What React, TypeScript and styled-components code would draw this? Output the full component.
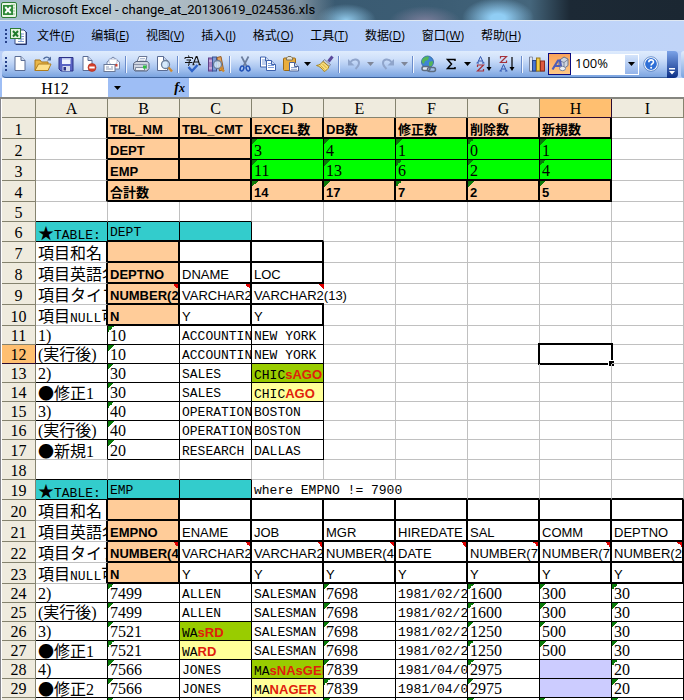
import React from "react";
import styled, { createGlobalStyle, css } from "styled-components";

const SANS = '"Liberation Sans", "Noto Sans CJK JP", sans-serif';
const MONO = '"Liberation Mono", "Noto Sans CJK JP", monospace';
const SERIF = '"Liberation Serif", "Noto Sans CJK JP", serif';
const UI = '"Open Sans", "Noto Sans CJK SC", sans-serif';

const GlobalStyle = createGlobalStyle`
  *, *::before, *::after { box-sizing: border-box; }
  body { margin: 0; background: #fff; color: #000; overflow: hidden; }
  button, input, select { font: inherit; color: inherit; border: 0; padding: 0; margin: 0; border-radius: 0; outline: none; }
`;

/* ---------- window frame ---------- */

const Window = styled.main`
  display: flex;
  flex-direction: column;
  height: 100vh;
  overflow: hidden;
  background: #9ebef5;
`;

const TitleBar = styled.header`
  display: flex;
  align-items: center;
  flex: none;
  gap: 5px;
  height: 21px;
  padding-left: 1px;
  border-bottom: 1px solid #dfe8f2;
  background:
    linear-gradient(90deg, #a3bccb 0, #b9c8d0 110px, #a3b1ba 230px, rgba(130, 148, 162, 0.9) 300px, transparent 335px),
    radial-gradient(ellipse 30px 16px at 346px 20px, #8fc8ea, transparent),
    radial-gradient(ellipse 36px 16px at 425px 22px, #7d7f9c, transparent),
    radial-gradient(ellipse 36px 20px at 498px 18px, #90cdf4 20%, transparent),
    linear-gradient(90deg, #34536b 0, #3c5d74 440px, #45667c 530px, #1c2935 570px, #1b2732 100%);
`;

const Title = styled.h1`
  margin: 0;
  font: 400 13px/18px Roboto, ${UI};
  white-space: nowrap;
`;

const MenuBar = styled.nav`
  display: flex;
  align-items: center;
  flex: none;
  height: 30px;
  padding-left: 5px;
  background: linear-gradient(90deg, #9ebdf5, #bdd3f9 70%, #c0d4f8);
`;

const Grip = styled.i`
  flex: none;
  width: 2px;
  height: 15px;
  background: repeating-linear-gradient(180deg, #27418a 0 2px, transparent 2px 4px);
`;

const MenuIcon = styled.span`
  display: flex;
  margin: 0 10px 0 3px;
`;

const MenuList = styled.div`
  display: flex;
  gap: 17px;
`;

const MenuButton = styled.button`
  background: none;
  font: 400 12px/18px ${UI};
  white-space: nowrap;
`;

/* ---------- toolbar ---------- */

const ToolRow = styled.div`
  display: flex;
  flex: none;
  height: 27px;
  padding-left: 2px;
  background: #b9cff8;
`;

const ToolBar = styled.div`
  display: flex;
  align-items: center;
  flex: none;
  width: 665px;
  padding-left: 3px;
  border-radius: 4px 0 0 4px;
  border-bottom: 1px solid #3b619c;
  background: linear-gradient(180deg, #dfecfd 0, #cfe0fa 30%, #a9c5f0 65%, #7ba4e0 100%);
`;

const Tools = styled.div`
  display: flex;
  align-items: center;
  margin-left: 1px;
`;

const ToolButton = styled.button<{ $active?: boolean }>`
  display: flex;
  align-items: center;
  justify-content: center;
  width: 23px;
  height: 22px;
  background: none;
  ${(p) =>
    p.$active &&
    css`
      border: 1px solid #0a0a80;
      background: linear-gradient(180deg, #f9a35c, #ffc884);
    `}
`;

const DropButton = styled.button<{ $faded?: boolean }>`
  display: flex;
  align-items: center;
  justify-content: center;
  width: 11px;
  height: 22px;
  background: none;
  color: ${(p) => (p.$faded ? "#7f8698" : "#000")};
`;

const Separator = styled.i`
  width: 2px;
  height: 17px;
  margin: 0 2px;
  background: linear-gradient(90deg, #6a8ccb 50%, #f1f6ff 50%);
`;

const ZoomBox = styled.div`
  display: flex;
  position: relative;
  width: 68px;
  height: 21px;
`;

const ZoomSelect = styled.select`
  flex: 1;
  appearance: none;
  padding: 0 0 2px 4px;
  background: #fff;
  font: 400 13px/19px ${UI};
`;

const ZoomArrow = styled.span`
  position: absolute;
  inset: 1px 1px 1px auto;
  display: flex;
  align-items: center;
  justify-content: center;
  width: 13px;
  background: linear-gradient(180deg, #d5e4fb, #93b4ea);
  pointer-events: none;
`;

const ToolEnd = styled.button`
  display: flex;
  flex: none;
  align-items: flex-end;
  justify-content: center;
  width: 11px;
  padding-bottom: 3px;
  border-radius: 0 4px 4px 0;
  background: linear-gradient(180deg, #7ba2e7, #0b2f86);
`;

const NextBar = styled.div`
  flex: 1;
  margin-left: 3px;
  border-radius: 4px 0 0 4px;
  background: linear-gradient(180deg, #dfecfd, #7ba4e0);
`;

/* ---------- formula bar ---------- */

const FormulaBar = styled.div`
  display: flex;
  flex: none;
  height: 19px;
  padding-left: 2px;
`;

const NameBox = styled.input`
  width: 106px;
  padding-top: 2px;
  background: #fff;
  font: 400 16px/16px ${SERIF};
  text-align: center;
`;

const NameDrop = styled.button`
  display: flex;
  align-items: center;
  justify-content: center;
  width: 19px;
  background: none;
`;

const FxButton = styled.button`
  width: 62px;
  padding-right: 4px;
  background: none;
  font: italic 700 14px/17px ${SERIF};
  text-align: right;
  sub { font-size: 12px; line-height: 12px; vertical-align: baseline; }
`;

const FormulaInput = styled.input`
  flex: 1;
  min-width: 0;
  background: #fff;
`;

/* ---------- sheet ---------- */

const Sheet = styled.section`
  flex: 1;
  min-height: 0;
  overflow: hidden;
  padding-left: 1px;
  border-top: 2px solid #85857f;
  border-left: 1px solid #85858c;
  background: #fff;
`;

const Grid = styled.table`
  width: 682px;
  table-layout: fixed;
  border-collapse: separate;
  border-spacing: 0;
`;

const HeadCell = styled.th<{ $active?: boolean; $h: number }>`
  height: ${(p) => p.$h}px;
  padding: 0;
  border-right: 1px solid ${(p) => (p.$active ? "#2a0a30" : "#85836f")};
  border-bottom: 1px solid ${(p) => (p.$active ? "#2a0a30" : "#85836f")};
  background: ${(p) => (p.$active ? "#ffbf70" : "#efebde")};
  font: 400 16px/16px ${SERIF};
  vertical-align: bottom;
`;

type Line = "none" | "grid" | "thin" | "thick";
const LINES: Record<Line, string> = {
  none: "0 solid transparent",
  grid: "1px solid #c0c0c0",
  thin: "1px solid #000",
  thick: "2px solid #000",
};

const FILLS: Record<string, string> = {
  peach: "#ffcc99",
  lime: "#00ff00",
  teal: "#33cccc",
  olive: "#99cc00",
  cream: "#ffff99",
  lilac: "#ccccff",
};

const MARKS: Record<string, string> = {
  text: "linear-gradient(135deg, #0a7a0a 50%, transparent 50%) left top / 6px 6px no-repeat",
  note: "linear-gradient(225deg, #e00000 50%, transparent 50%) right top / 5px 5px no-repeat",
};

const DataCell = styled.td<{ $right: Line; $bottom: Line; $fill?: string; $mark?: string }>`
  position: relative;
  padding: 0;
  border-right: ${(p) => LINES[p.$right]};
  border-bottom: ${(p) => LINES[p.$bottom]};
  background: ${(p) => (p.$mark ? MARKS[p.$mark] : "none")};
  background-color: ${(p) => (p.$fill ? FILLS[p.$fill] : "transparent")};
  background-clip: padding-box;
  vertical-align: bottom;
`;

type Face = "mono" | "serif" | "sans" | "bold";

const FACES: Record<Face, string> = {
  mono: `400 13px/20px ${MONO}`,
  serif: `400 16px/18px ${SERIF}`,
  sans: `400 13px/20px ${SANS}`,
  bold: `700 13px/20px ${SANS}`,
};

const CellText = styled.div<{ $face: Face; $spill?: boolean }>`
  height: 17px;
  padding-left: 2px;
  overflow: ${(p) => (p.$spill ? "visible" : "hidden")};
  font: ${(p) => FACES[p.$face]};
  white-space: pre;
`;

const Mono = styled.span`
  font: 400 13px/16px ${MONO};
`;

const Glyph = styled.span`
  font: 400 16px/16px "Noto Sans CJK JP", sans-serif;
`;

const Changed = styled.b`
  color: #e0200c;
  font: ${FACES.bold};
`;

const Selection = styled.span`
  position: absolute;
  inset: -2px -2px -2px -2px;
  border: 2px solid #000;
  &::after {
    content: "";
    position: absolute;
    right: -3px;
    bottom: -3px;
    width: 5px;
    height: 5px;
    background: #000;
    box-shadow: -1px -1px 0 #fff;
  }
`;

/* ---------- icons ---------- */

const Icon = ({ children, size = 18 }: { children: React.ReactNode; size?: number }) => (
  <svg width={size} height={size} viewBox="0 0 18 18" fill="none" aria-hidden="true">
    {children}
  </svg>
);

const Arrow = ({ color = "currentColor" }: { color?: string }) => (
  <svg width="7" height="4" viewBox="0 0 7 4" aria-hidden="true">
    <path d="M0 0h7L3.500 4z" fill={color} />
  </svg>
);

const page = (x: number, y: number, w: number, h: number, stroke = "#5a6c94") => (
  <>
    <path d={`M${x} ${y}h${w - 4}l4 4v${h - 4}h-${w}z`} fill="#fff" stroke={stroke} />
    <path d={`M${x + w - 4} ${y}v4h4`} fill="#cbd8ef" stroke={stroke} />
  </>
);

const lens = (
  <>
    <circle cx="10.500" cy="9.500" r="4" fill="#cfe6fb" fillOpacity="0.85" stroke="#6c7f99" strokeWidth="1.300" />
    <path d="M13.500 12.500l3.500 4" stroke="#d08a2c" strokeWidth="2.400" />
  </>
);

const ExcelIcon = () => (
  <svg width="16" height="16" viewBox="0 0 16 16" aria-hidden="true">
    <rect x="0.500" y="0.500" width="15" height="15" rx="1.500" fill="#eaf6e6" stroke="#2d7d35" />
    <path d="M10 3h4M10 6h4M10 9h4M10 12h4" stroke="#8fbf8c" />
    <rect x="2" y="3" width="10" height="10" fill="#2f8a3a" />
    <path d="M4.300 5l5.400 6M9.700 5l-5.400 6" stroke="#fff" strokeWidth="1.900" />
  </svg>
);

const WorkbookIcon = () => (
  <svg width="17" height="17" viewBox="0 0 17 17" aria-hidden="true">
    <path d="M6 2h8l2 2v12H5V10" fill="#fff" stroke="#3b4f86" />
    <path d="M16.500 4v12.500H6" stroke="#25346a" fill="none" />
    <path d="M11 6h3M11 8.500h3M8 11h6M8 13.500h6M11 5v9" stroke="#7f9bd0" />
    <rect x="0.500" y="0.500" width="10" height="10" fill="#e3f3df" stroke="#2d7d35" />
    <path d="M3 3l5 5.500M8 3L3 8.500" stroke="#1f7a2c" strokeWidth="2" />
  </svg>
);

const NewIcon = () => <Icon>{page(4, 1.5, 10, 14)}</Icon>;

const OpenIcon = () => (
  <Icon>
    <path d="M1 15.500V5h5l1.500 2H14v8.500z" fill="#e9b74a" stroke="#a9761b" />
    <path d="M1 15.500L4.500 9H17l-3 6.500z" fill="#ffe08a" stroke="#b07d1d" />
    <path d="M9.500 4c2-2.500 4.500-2.500 6-.500" stroke="#4d6a9c" strokeWidth="1.300" />
    <path d="M17 1.500v4h-4z" fill="#4d6a9c" />
  </Icon>
);

const SaveIcon = () => (
  <Icon>
    <path d="M2 2.500h14v13.500H4l-2-2z" fill="#5a63c4" stroke="#2b3286" />
    <rect x="5" y="3" width="8.500" height="6" fill="#eef2ff" />
    <path d="M5 3h8.500v1.500H5z" fill="#b9c5ee" />
    <rect x="5.500" y="11" width="7.500" height="5" fill="#d7dcef" />
    <rect x="6.500" y="12" width="2.500" height="3.500" fill="#2b3286" />
  </Icon>
);

const PermissionIcon = () => (
  <Icon>
    {page(3, 1.5, 9, 14)}
    <circle cx="12" cy="12.500" r="4" fill="#d5402c" stroke="#a8281a" strokeWidth="0.600" />
    <rect x="9.300" y="11.500" width="5.400" height="2" fill="#fff" />
  </Icon>
);

const MailIcon = () => (
  <Icon>
    <path d="M4 7l6-5 6.500 5v7H4z" fill="#f7f9ff" stroke="#7485a8" />
    <path d="M6 7.500V4h8v4l-4 3z" fill="#fff" stroke="#9aa8c6" strokeWidth="0.700" />
    <rect x="12" y="9" width="2.500" height="2.500" fill="#d5402c" />
    <rect x="1" y="9.500" width="11" height="7" fill="#fff" stroke="#6a7896" />
    <path d="M3 12h3M3 14h7M8 12h2" stroke="#8c9ab8" />
  </Icon>
);

const PrintIcon = () => (
  <Icon>
    <path d="M5 7l2-5.500h8L13.500 7z" fill="#fff" stroke="#6a7896" />
    <path d="M8 3.500h5M7.500 5.200h5" stroke="#9aaac9" strokeWidth="0.800" />
    <path d="M1.500 8.500L4 6.500h11.500l1.500 2v5L15 16H3l-1.500-2z" fill="#cfd5e2" stroke="#59657f" />
    <path d="M2 9.500h12.500v4" stroke="#8a95ac" />
    <path d="M3.500 12.500h9v3h-9z" fill="#eef1f7" stroke="#59657f" strokeWidth="0.700" />
    <rect x="11" y="10.500" width="3.500" height="3" fill="#2fc140" />
  </Icon>
);

const PreviewIcon = () => (
  <Icon>
    {page(2.5, 1.5, 10, 14)}
    {lens}
  </Icon>
);

const SpellIcon = () => (
  <Icon>
    <path d="M4.500 0.500l.500 1.500M1 4V2.500h7.500V4M2.500 5h4.500L5 6.500v3.500l-1 .500M1 7.500h7.500" stroke="#111" />
    <path d="M9 9.500l3.200-8h.8L15.500 9.500M10 7h5M8.500 9.700h2M14.500 9.700h2.500" stroke="#111" strokeWidth="1.100" />
    <path d="M4.500 12l3.500 4 5.500-6" stroke="#2f63c8" strokeWidth="2.400" />
  </Icon>
);

const ResearchIcon = () => (
  <Icon>
    <rect x="1.500" y="3" width="4" height="13" fill="#a77fc0" stroke="#5e3f86" />
    <path d="M2 6h3M2 13h3" stroke="#e9d9f2" />
    <rect x="5.500" y="2" width="4" height="14" fill="#7f9ad6" stroke="#3a5494" />
    <path d="M10 2.500l4-1 2.500 13-4 1.500z" fill="#e2a35f" stroke="#95602a" />
    {lens}
  </Icon>
);

const CutIcon = () => (
  <Icon>
    <path d="M5.500 1.500L10.500 11M12.500 1.500L7.500 11" stroke="#6d7f9e" strokeWidth="1.700" />
    <ellipse cx="6" cy="13.500" rx="1.800" ry="2.500" stroke="#1f4fb4" strokeWidth="1.500" transform="rotate(20 6 13.500)" />
    <ellipse cx="12" cy="13.500" rx="1.800" ry="2.500" stroke="#1f4fb4" strokeWidth="1.500" transform="rotate(-20 12 13.500)" />
  </Icon>
);

const CopyIcon = () => (
  <Icon>
    {page(1.5, 2, 9, 10, "#3e63ae")}
    <path d="M3 7h6M3 9h6M3 5h3" stroke="#7f9fdc" />
    {page(7.500, 5.500, 9, 10, "#3e63ae")}
    <path d="M9 10.500h6M9 12.500h6M9 8.500h3" stroke="#7f9fdc" />
  </Icon>
);

const PasteIcon = () => (
  <Icon>
    <rect x="1.500" y="3" width="12" height="12.500" rx="1" fill="#e9ad3c" stroke="#9a6a17" />
    <path d="M4.500 5V3l1.500-1.500h3L10.500 3v2z" fill="#e6e2d3" stroke="#7c7560" />
    {page(7.500, 7.500, 9, 8.500, "#4d6396")}
    <path d="M9 12.500h6M9 14.300h6" stroke="#8ea4d0" />
  </Icon>
);

const BrushIcon = () => (
  <Icon>
    <path d="M16.500 1.500l-4 5" stroke="#5b4a9c" strokeWidth="3" />
    <path d="M8.500 4.500l6 5-1.500 2-6.500-5z" fill="#c3c9d9" stroke="#6b7590" strokeWidth="0.800" />
    <path d="M7 6.500l6 5c-1 3-3 4-5 5-1-2-4.500-5.500-7.500-6 3-.500 5-2 6.500-4z" fill="#f7dc7c" stroke="#a98622" />
    <path d="M4.500 10.500l4 4M6.500 9l4 4" stroke="#d3ab3c" />
  </Icon>
);

const UndoIcon = () => (
  <Icon>
    <path d="M5.500 7C8.500 3 14 4 14 8c0 2.500-1.500 4-3.500 6" stroke="#90a5cb" strokeWidth="2" />
    <path d="M3 4v6.500h6.500z" fill="#90a5cb" />
  </Icon>
);

const RedoIcon = () => (
  <Icon>
    <path d="M12.500 7C9.500 3 4 4 4 8c0 2.500 1.500 4 3.500 6" stroke="#90a5cb" strokeWidth="2" />
    <path d="M15 4v6.500H8.500z" fill="#90a5cb" />
  </Icon>
);

const LinkIcon = () => (
  <Icon>
    <circle cx="8.500" cy="7" r="6" fill="#3f86d4" stroke="#2a5e9c" strokeWidth="0.800" />
    <path d="M4 3.500c2-2 5-2.500 6-1.500l-1 3-3 1-1 3-2-1.500c-.500-1.500 0-3 1-4zM10 7l3.500-1c1 2 0 4-1.500 5.500l-2-1z" fill="#55b557" />
    <rect x="3" y="11.500" width="8" height="4" rx="2" stroke="#5d6c80" strokeWidth="1.500" fill="#e4ebf4" />
    <rect x="8.500" y="12.500" width="8" height="4" rx="2" stroke="#5d6c80" strokeWidth="1.500" />
  </Icon>
);

const SumIcon = () => (
  <Icon>
    <path d="M13 6V4.500H5.500L9.500 9l-4 4.500H13V12" stroke="#000" strokeWidth="1.500" />
  </Icon>
);

const letterA = (y: number) => <path d={`M1.500 ${y + 6.500}L4.500 ${y}L7.500 ${y + 6.500}M2.500 ${y + 4.500}h4M.500 ${y + 6.500}h2.500M6 ${y + 6.500}h2.500`} stroke="#3458b0" strokeWidth="1" />;
const letterZ = (y: number) => <path d={`M1.500 ${y + 2}V${y}h6L1.500 ${y + 6}h6v-2`} stroke="#a5323c" strokeWidth="1.200" />;

const SortIcon = ({ descending = false }: { descending?: boolean }) => (
  <Icon>
    {descending ? letterZ(1.5) : letterA(1.5)}
    {descending ? letterA(9.5) : letterZ(10)}
    <path d="M13 2v12" stroke="#000" strokeWidth="1.200" />
    <path d="M10.500 12h5L13 16z" fill="#000" />
  </Icon>
);

const ChartIcon = () => (
  <Icon>
    <path d="M1.500 2v14h15" stroke="#505a70" />
    <path d="M1.500 2h3v14h-3z" fill="#dfe4ee" stroke="#6b7590" strokeWidth="0.700" />
    <rect x="4.500" y="5.500" width="3.500" height="10.500" fill="#4a76d2" stroke="#24448c" />
    <rect x="8.500" y="3" width="3.500" height="13" fill="#f4cd45" stroke="#97771b" />
    <rect x="12.500" y="6" width="4" height="10" fill="#dc5940" stroke="#8e2b1b" />
  </Icon>
);

const DrawingIcon = () => (
  <Icon>
    <path d="M8 5.500l5-3.500 4 2v6.500l-4 3-5-2z" fill="#cfd5df" stroke="#68748e" />
    <path d="M8 5.500l5 2 4-3M13 7.500v6" stroke="#68748e" strokeWidth="0.800" />
    <path d="M1.500 14.500L7 5.500h2l1.500 9M4 11h5.500" stroke="#4d5cb8" strokeWidth="2.200" />
    <ellipse cx="11.500" cy="13.500" rx="3" ry="2.200" fill="#eceff5" stroke="#77829b" />
  </Icon>
);

const HelpIcon = () => (
  <Icon>
    <circle cx="9" cy="9" r="6.500" fill="#2f6fd6" stroke="#fff" strokeWidth="1.200" />
    <circle cx="9" cy="9" r="7.300" stroke="#4673b8" strokeWidth="0.700" />
    <path d="M6.800 7.200c0-3.200 4.700-3 4.700-.300 0 1.800-2.400 1.800-2.400 3.700" stroke="#fff" strokeWidth="1.600" />
    <circle cx="9.100" cy="12.700" r="1" fill="#fff" />
  </Icon>
);

/* ---------- data ---------- */

const MENUS = [
  ["文件", "F"], ["编辑", "E"], ["视图", "V"], ["插入", "I"], ["格式", "O"],
  ["工具", "T"], ["数据", "D"], ["窗口", "W"], ["帮助", "H"],
];

const COLUMNS = ["A", "B", "C", "D", "E", "F", "G", "H", "I"];

type Cell = {
  text?: React.ReactNode;
  face?: Face;
  fill?: string;
  mark?: string;
  spill?: boolean;
  span?: number;
};

const label = (text: React.ReactNode, fill?: string): Cell => ({ text, face: "serif", fill });
const mono = (text: string): Cell => ({ text, face: "mono" });
const num = (text: string, fill?: string): Cell => ({ text, face: "serif", mark: "text", fill });
const head = (text: string): Cell => ({ text, face: "bold", fill: "peach" });
const total = (text: string): Cell => ({ ...head(text), mark: "text" });
const sans = (text: string): Cell => ({ text, face: "sans" });
const type = (text: string): Cell => ({ text, face: "sans", mark: "note" });
const diff = (fill: string, plain: string, changed: string): Cell => ({
  text: <>{plain}<Changed>{changed}</Changed></>,
  face: "mono",
  fill,
});
const empty: Cell = {};
const lilac: Cell = { fill: "lilac" };
const keyType = (text: string): Cell => ({ ...head(text), mark: "note" });
const bullet = (text: string): Cell => label(<><Glyph>●</Glyph>{text}</>);

const tableTag = label(<><Glyph>★</Glyph><Mono>TABLE:</Mono></>, "teal");
const nullTag = label(<>項目<Mono>NULL</Mono>可</>);

const ROWS: Cell[][] = [
  [empty, head("TBL_NM"), head("TBL_CMT"), head("EXCEL数"), head("DB数"), head("修正数"), head("削除数"), head("新規数")],
  [empty, head("DEPT"), head(""), num("3", "lime"), num("4", "lime"), num("1", "lime"), num("0", "lime"), num("1", "lime")],
  [empty, head("EMP"), head(""), num("11", "lime"), num("13", "lime"), num("6", "lime"), num("2", "lime"), num("4", "lime")],
  [empty, { ...head("合計数"), span: 2 }, total("14"), total("17"), total("7"), total("2"), total("5")],
  [],
  [tableTag, { ...mono("DEPT"), fill: "teal" }, { fill: "teal" }],
  [label("項目和名"), head("")],
  [label("項目英語名"), head("DEPTNO"), sans("DNAME"), sans("LOC")],
  [label("項目タイプ"), keyType("NUMBER(2)"), type("VARCHAR2(14)"), { ...type("VARCHAR2(13)"), spill: true }],
  [nullTag, head("N"), sans("Y"), sans("Y")],
  [label("1)"), num("10"), mono("ACCOUNTING"), mono("NEW YORK")],
  [label("(実行後)"), num("10"), mono("ACCOUNTING"), mono("NEW YORK")],
  [label("2)"), num("30"), mono("SALES"), diff("olive", "CHIC", "sAGO")],
  [bullet("修正1"), num("30"), mono("SALES"), diff("cream", "CHIC", "AGO")],
  [label("3)"), num("40"), mono("OPERATIONS"), mono("BOSTON")],
  [label("(実行後)"), num("40"), mono("OPERATIONS"), mono("BOSTON")],
  [bullet("新規1"), num("20"), mono("RESEARCH"), mono("DALLAS")],
  [],
  [tableTag, { ...mono("EMP"), fill: "teal" }, { fill: "teal" }, { ...mono("where EMPNO != 7900"), spill: true }],
  [label("項目和名"), head("")],
  [label("項目英語名"), head("EMPNO"), sans("ENAME"), sans("JOB"), sans("MGR"), sans("HIREDATE"), sans("SAL"), sans("COMM"), sans("DEPTNO")],
  [label("項目タイプ"), keyType("NUMBER(4)"), type("VARCHAR2(10)"), type("VARCHAR2(9)"), type("NUMBER(4)"), type("DATE"), type("NUMBER(7,2)"), type("NUMBER(7,2)"), type("NUMBER(2)")],
  [nullTag, head("N"), sans("Y"), sans("Y"), sans("Y"), sans("Y"), sans("Y"), sans("Y"), sans("Y")],
  [label("2)"), num("7499"), mono("ALLEN"), mono("SALESMAN"), num("7698"), mono("1981/02/20"), num("1600"), num("300"), num("30")],
  [label("(実行後)"), num("7499"), mono("ALLEN"), mono("SALESMAN"), num("7698"), mono("1981/02/20"), num("1600"), num("300"), num("30")],
  [label("3)"), num("7521"), diff("olive", "WA", "sRD"), mono("SALESMAN"), num("7698"), mono("1981/02/22"), num("1250"), num("500"), num("30")],
  [bullet("修正1"), num("7521"), diff("cream", "WA", "RD"), mono("SALESMAN"), num("7698"), mono("1981/02/22"), num("1250"), num("500"), num("30")],
  [label("4)"), num("7566"), mono("JONES"), diff("olive", "MA", "sNAsGER"), num("7839"), mono("1981/04/02"), num("2975"), lilac, num("20")],
  [bullet("修正2"), num("7566"), mono("JONES"), diff("cream", "MA", "NAGER"), num("7839"), mono("1981/04/02"), num("2975"), lilac, num("20")],
  [label("5)"), num("7654"), mono("MARTIN"), mono("SALESMAN"), num("7698"), mono("1981/09/28"), num("1250"), num("1400"), num("30")],
];

const within = (n: number, low: number, high: number) => n >= low && n <= high;

const rowHeight = (r: number) => {
  if (within(r, 11, 16) || r >= 24) return 19;
  return r === 5 || r === 6 || within(r, 17, 19) ? 20 : 21;
};

const rightLine = (r: number, c: number): Line => {
  if (r === 9 && c === 3) return "none";
  if (r === 19 && (c === 3 || c === 4)) return "none";
  if ((r === 1 || r === 4) && c <= 7) return "thick";
  if ((r === 2 || r === 3) && c <= 7) return c <= 2 ? "thick" : "thin";
  if ((r === 6 || r === 19) && c <= 2) return "thin";
  if (within(r, 7, 10) && c <= 3) return "thick";
  if (within(r, 11, 17) && c <= 3) return "thin";
  if (within(r, 20, 23)) return "thick";
  return r >= 24 ? "thin" : "grid";
};

const bottomLine = (r: number, c: number): Line => {
  if (r === 2 && within(c, 3, 7)) return "thin";
  if (r <= 4 && within(c, 1, 7)) return "thick";
  if ((r === 5 || r === 18) && c <= 2) return "thin";
  if ((r === 6 || r === 19) && c === 0) return "thin";
  if (within(r, 6, 10) && within(c, 1, 3)) return "thick";
  if (within(r, 11, 16) && c <= 3) return "thin";
  if (r === 17 && within(c, 1, 3)) return "thin";
  if (within(r, 19, 23) && c >= 1) return "thick";
  return r >= 24 ? "thin" : "grid";
};

const SheetRow = ({ cells, row }: { cells: Cell[]; row: number }) => {
  const drawn: React.ReactNode[] = [];
  let index = 0;
  for (let c = 0; c < COLUMNS.length; index += 1) {
    const cell = cells[index] ?? empty;
    const span = cell.span ?? 1;
    const last = c + span - 1;
    drawn.push(
      <DataCell key={c} colSpan={span} $right={rightLine(row, last)} $bottom={bottomLine(row, c)} $fill={cell.fill} $mark={cell.mark}>
        {cell.text ? <CellText $face={cell.face ?? "mono"} $spill={cell.spill}>{cell.text}</CellText> : null}
        {row === 12 && c === 7 ? <Selection /> : null}
      </DataCell>,
    );
    c += span;
  }
  return (
    <tr>
      <HeadCell scope="row" $h={rowHeight(row)} $active={row === 12}>{row}</HeadCell>
      {drawn}
    </tr>
  );
};

const Tool = ({ name, active, children }: { name: string; active?: boolean; children: React.ReactNode }) => (
  <ToolButton type="button" aria-label={name} $active={active}>{children}</ToolButton>
);

const Drop = ({ name, faded }: { name: string; faded?: boolean }) => (
  <DropButton type="button" aria-label={name} $faded={faded}><Arrow /></DropButton>
);

export default function App() {
  return (
    <Window>
      <GlobalStyle />
      <TitleBar>
        <ExcelIcon />
        <Title>Microsoft Excel - change_at_20130619_024536.xls</Title>
      </TitleBar>

      <MenuBar>
        <Grip />
        <MenuIcon><WorkbookIcon /></MenuIcon>
        <MenuList>
          {MENUS.map(([name, key]) => (
            <MenuButton key={key} type="button">{name}(<u>{key}</u>)</MenuButton>
          ))}
        </MenuList>
      </MenuBar>

      <ToolRow>
        <ToolBar>
          <Grip />
          <Tools>
            <Tool name="New"><NewIcon /></Tool>
            <Tool name="Open"><OpenIcon /></Tool>
            <Tool name="Save"><SaveIcon /></Tool>
            <Tool name="Permission"><PermissionIcon /></Tool>
            <Tool name="E-mail"><MailIcon /></Tool>
            <Separator />
            <Tool name="Print"><PrintIcon /></Tool>
            <Tool name="Print preview"><PreviewIcon /></Tool>
            <Separator />
            <Tool name="Spelling"><SpellIcon /></Tool>
            <Tool name="Research"><ResearchIcon /></Tool>
            <Separator />
            <Tool name="Cut"><CutIcon /></Tool>
            <Tool name="Copy"><CopyIcon /></Tool>
            <Tool name="Paste"><PasteIcon /></Tool>
            <Drop name="Paste options" />
            <Tool name="Format painter"><BrushIcon /></Tool>
            <Separator />
            <Tool name="Undo"><UndoIcon /></Tool>
            <Drop name="Undo list" faded />
            <Tool name="Redo"><RedoIcon /></Tool>
            <Drop name="Redo list" faded />
            <Separator />
            <Tool name="Hyperlink"><LinkIcon /></Tool>
            <Tool name="Sum"><SumIcon /></Tool>
            <Drop name="Functions" />
            <Tool name="Sort ascending"><SortIcon /></Tool>
            <Tool name="Sort descending"><SortIcon descending /></Tool>
            <Separator />
            <Tool name="Chart"><ChartIcon /></Tool>
            <Tool name="Drawing" active><DrawingIcon /></Tool>
            <ZoomBox>
              <ZoomSelect aria-label="Zoom" defaultValue="100%">
                <option>100%</option>
                <option>75%</option>
                <option>50%</option>
              </ZoomSelect>
              <ZoomArrow><Arrow /></ZoomArrow>
            </ZoomBox>
            <Tool name="Help"><HelpIcon /></Tool>
          </Tools>
        </ToolBar>
        <ToolEnd type="button" aria-label="Toolbar options">
          <svg width="7" height="7" viewBox="0 0 7 7" aria-hidden="true">
            <path d="M0 0h6v1.500H0zM0 3h6L3 6.500z" fill="#fff" />
          </svg>
        </ToolEnd>
        <NextBar />
      </ToolRow>

      <FormulaBar>
        <NameBox aria-label="Name box" defaultValue="H12" />
        <NameDrop type="button" aria-label="Named cells"><Arrow /></NameDrop>
        <FxButton type="button" aria-label="Insert function">f<sub>x</sub></FxButton>
        <FormulaInput aria-label="Formula" />
      </FormulaBar>

      <Sheet>
        <Grid>
          <colgroup>
            <col width="34" />
            {COLUMNS.map((c) => <col key={c} width="72" />)}
          </colgroup>
          <thead>
            <tr>
              <HeadCell as="td" $h={19} />
              {COLUMNS.map((c) => <HeadCell key={c} scope="col" $h={19} $active={c === "H"}>{c}</HeadCell>)}
            </tr>
          </thead>
          <tbody>
            {ROWS.map((cells, i) => <SheetRow key={i} cells={cells} row={i + 1} />)}
          </tbody>
        </Grid>
      </Sheet>
    </Window>
  );
}
